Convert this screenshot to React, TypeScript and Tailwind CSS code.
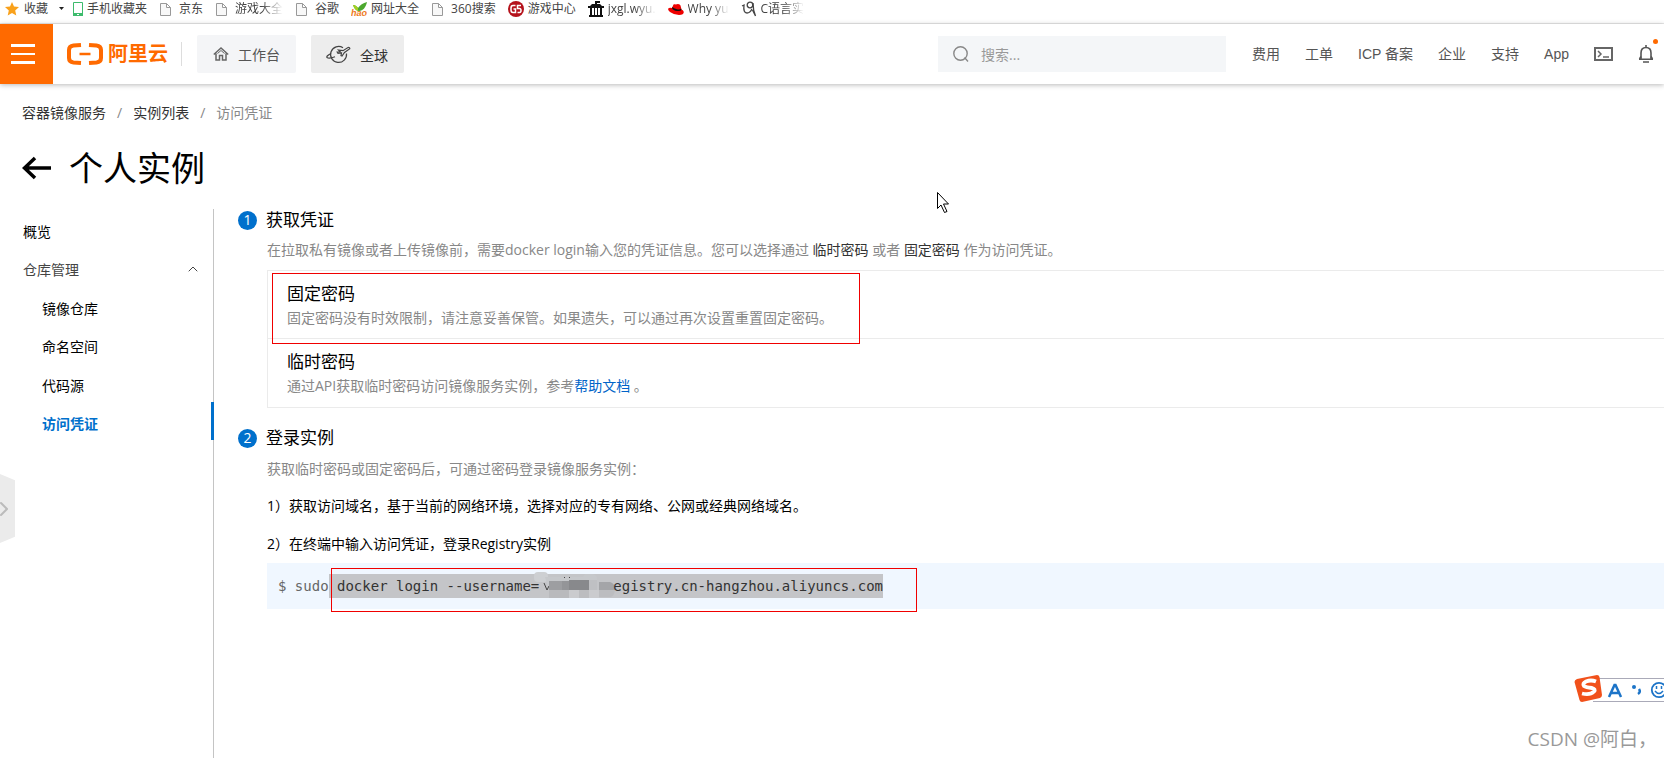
import { ReactNode } from "react";
import { ChevronRight, ChevronUp } from "lucide-react";
import clsx from "clsx";

interface BookmarkProps {
  icon: ReactNode
  label: string
  faded?: boolean
}

const StarIcon = () => (
  <svg width="16" height="16" viewBox="0 0 16 16">
    <path d="M8 1l2 4.600 5 .5-3.800 3.400 1.100 5L8 12l-4.300 2.500 1.100-5L1 6.100l5-.5z" fill="#f9a11b" />
  </svg>
);

const PhoneIcon = () => (
  <svg width="16" height="16" viewBox="0 0 16 16">
    <path d="M6.500 1.500h9v13h-9z" fill="#fff" stroke="#3dbb6c" />
    <path d="M6 12h10v3H6z" fill="#3dbb6c" />
    <path d="M10 13h2v1h-2z" fill="#fff" />
  </svg>
);

const PageIcon = () => (
  <svg width="16" height="16" viewBox="0 0 16 16">
    <path d="M1.500 2.500h6l4 4v8h-10zM7.500 2.500v4h4" fill="#f8f8f8" stroke="#999" />
  </svg>
);

const HaoIcon = () => (
  <svg width="16" height="16" viewBox="0 0 16 16">
    <path d="M2 4c3 0 4 2 5 3C9 4 12 2 16 1c-1 5-4 9-8 9C5 10 3 7 2 4z" fill="#4ca82f" />
    <path d="M2 4c3 0 4 2 5 3l0 3C4 9 3 7 2 4z" fill="#a4d022" />
    <text x="0" y="15" fontSize="9" fontWeight="bold" fontStyle="italic" fill="#ee7a22" fontFamily="Liberation Sans, sans-serif">hao</text>
  </svg>
);

const GameIcon = () => (
  <svg width="16" height="16" viewBox="0 0 16 16" fill="none">
    <circle cx="8" cy="8" r="8" fill="#b5121b" />
    <path d="M7.500 4.500H5Q3 4.500 3 7v2q0 2.500 2 2.500h2.500V8H5.500M13 4.500H9.500v3h2q1.500 0 1.500 2t-1.500 2h-2" stroke="#fff" strokeWidth="1.500" />
  </svg>
);

const TempleIcon = () => (
  <svg width="16" height="16" viewBox="0 0 16 16" fill="#111">
    <path d="M7 0h5v2H9v1h3l3 3v1H1V6l3-3h3zM2 7h2v7H2zM6 7h1v7H6zM9 7h1v7H9zM12 7h2v7h-2zM1 14h14v2H1z" />
    <path d="M0 5h16v2H0z" />
  </svg>
);

const HatIcon = () => (
  <svg width="16" height="16" viewBox="0 0 16 16">
    <path d="M4 7l1.500-3.500Q6 3 7 3.300t3-.3q2 0 2.500 1.500l1 4q2 .8 2.300 2.500 0 3-4.800 3T2 11Q-.500 9 .300 7.500 1 6.500 4 7z" fill="#e00" />
    <path d="M4 7q1 2.500 5 3 4 .5 4.500-1.500L13 7.500q-1 1.500-4 .8-3.500-.8-4.500-2.300z" fill="#111" />
  </svg>
);

const ScriptIcon = () => (
  <svg width="16" height="16" viewBox="0 0 16 16" fill="none" stroke="#444" strokeWidth="1.300">
    <path d="M1 5l2-1q-1 8 3 8 3 0 5-4" />
    <circle cx="9" cy="4" r="2.800" />
    <path d="M12 2q0 7 2.500 13L11.500 9" />
  </svg>
);

const Bookmark = ({ icon, label, faded }: BookmarkProps) => (
  <a href="#" className="flex shrink-0 items-center gap-1">
    {icon}
    <span
      className={clsx(
        "whitespace-nowrap",
        faded && "[mask-image:linear-gradient(to_right,#000_55%,transparent)]"
      )}>
      {label}
    </span>
  </a>
);

const BookmarkBar = () => (
  <div className="flex h-6 items-center border-b border-[#e8e8e8] pb-[6px] pl-1 text-[12px] text-[#444]">
    <Bookmark icon={<StarIcon />} label="收藏" />
    <svg width="5" height="3" className="mr-[3px] ml-[11px] shrink-0"><path d="M0 0h5L2.500 3z" fill="#222" /></svg>
    <div className="flex gap-3">
      <Bookmark icon={<PhoneIcon />} label="手机收藏夹" />
      <Bookmark icon={<PageIcon />} label="京东" />
      <Bookmark icon={<PageIcon />} label="游戏大全" faded />
      <Bookmark icon={<PageIcon />} label="谷歌" />
      <Bookmark icon={<HaoIcon />} label="网址大全" />
      <Bookmark icon={<PageIcon />} label="360搜索" />
      <Bookmark icon={<GameIcon />} label="游戏中心" />
      <Bookmark icon={<TempleIcon />} label="jxgl.wyu." faded />
      <Bookmark icon={<HatIcon />} label="Why yu" faded />
      <Bookmark icon={<ScriptIcon />} label="C语言实" faded />
    </div>
  </div>
);

const Logo = () => (
  <a href="#" className="flex items-center gap-[5px] text-[20px] leading-6 font-bold whitespace-nowrap text-[#ff6a00]">
    <svg width="36" height="22" viewBox="0 0 36 22" fill="none" stroke="#ff6a00">
      <path d="M14 2L6.500 2.500Q2 3 2 7v8q0 4 4.500 4.500l7.500.5" strokeWidth="4" />
      <path d="M22 2L29.500 2.500Q34 3 34 7v8q0 4-4.500 4.500l-7.500.5" strokeWidth="4" />
      <path d="M12.500 11h11" strokeWidth="2.500" />
    </svg>
    阿里云
  </a>
);

const HomeIcon = () => (
  <svg width="16" height="16" viewBox="0 0 16 16" fill="none" stroke="#666" strokeWidth="1.500">
    <path d="M.800 8.500L8 2l7.200 6.500M3 7.500V14h3.500V9.500h3V14H13V7.500" />
    <path d="M4.500 7.500L8 4.500l3.500 3" strokeWidth="1" />
  </svg>
);

const GlobeIcon = () => (
  <svg width="25" height="20" viewBox="0 0 25 20" fill="none" stroke="#444" strokeWidth="1.200">
    <path d="M17 3.800A8 8 0 1 0 20.500 9.500" />
    <path d="M5 9.500Q0 12 1 13.500 3 15 9 12.800" />
    <path d="M12.500 6l4.500.7 5-3.200q2-.3 1.800 1.200l-5.300 3.800-2.500 3.500-1-.3.500-2.700-3.500.300-.8-1.300 3-.2z" fill="#eee" />
  </svg>
);

const NAV_LINKS = ["费用", "工单", "ICP 备案", "企业", "支持", "App"];

const Header = () => (
  <header className="flex h-[60px] items-center text-[14px] text-[#555] shadow-[0_1px_5px_rgba(0,0,0,0.28)]">
    <button aria-label="菜单" className="flex h-full w-[53px] shrink-0 flex-col justify-center gap-[6px] bg-[#ff6a00] pl-[11px]">
      <span className="h-[3px] w-6 bg-white" />
      <span className="h-[2px] w-6 bg-white" />
      <span className="h-[3px] w-6 bg-white" />
    </button>
    <div className="mr-[15px] ml-[14px] border-r border-[#ddd] pr-[13px]"><Logo /></div>
    <button className="flex h-[38px] w-[99px] shrink-0 items-center gap-[9px] rounded-xs bg-[#f4f5f7] pl-4">
      <HomeIcon />
      工作台
    </button>
    <button className="ml-[15px] flex h-[38px] w-[93px] shrink-0 items-center gap-[9px] rounded-xs bg-[#ededed] pl-[15px] text-[#333]">
      <GlobeIcon />
      <span className="pt-[2px]">全球</span>
    </button>
    <label className="mr-[26px] ml-auto flex h-9 w-72 items-center gap-3 bg-[#f4f6f8] pl-[15px]">
      <svg width="16" height="16" viewBox="0 0 16 16" fill="none" stroke="#888" strokeWidth="1.400">
        <circle cx="7.500" cy="7.500" r="6.700" />
        <path d="M11.500 11.500l3.500 4" />
      </svg>
      <input type="text" aria-label="搜索" placeholder="搜索..." className="min-w-0 flex-1 bg-transparent outline-none placeholder:text-[#999]" />
    </label>
    <nav className="flex shrink-0 items-center gap-[25px] pr-[10px] font-['Liberation_Sans','Noto_Sans_CJK_SC',sans-serif] whitespace-nowrap">
      {NAV_LINKS.map(link => <a key={link} href="#">{link}</a>)}
      <button aria-label="终端">
        <svg width="19" height="14" viewBox="0 0 19 14" fill="none" stroke="#666" strokeWidth="2">
          <path d="M1 1h17v12H1z" />
          <path d="M4 4l3 3-3 3M9 10h6" strokeWidth="1.500" />
        </svg>
      </button>
      <button aria-label="消息" className="relative">
        <svg width="16" height="18" viewBox="0 0 16 18" fill="none" stroke="#555" strokeWidth="1.600">
          <path d="M8 0v2M1 14.200h14M3 14V8q0-5.500 5-5.500T13 8v6M5 17h6" />
          <path d="M3 11.500L1.500 14M13 11.500l1.500 2.500" />
        </svg>
        <span className="absolute -top-[6px] -right-1 h-[5px] w-[5px] rounded-full bg-[#ff6a00]" />
      </button>
    </nav>
  </header>
);

const Sidebar = () => (
  <nav className="relative w-[214px] shrink-0 border-r border-[#c4c4c4] pt-[3px] text-[14px] text-black">
    <a href="#" className="flex h-[38px] items-center pl-[23px]">概览</a>
    <button className="flex h-[38px] w-full items-center justify-between pr-[12px] pl-[23px] text-[#444]">
      仓库管理
      <ChevronUp size={16} strokeWidth={1.5} />
    </button>
    <a href="#" className="flex h-[38px] items-center pt-[2px] pl-[42px]">镜像仓库</a>
    <a href="#" className="flex h-[38px] items-center pt-[2px] pl-[42px]">命名空间</a>
    <a href="#" className="flex h-[38px] items-center pt-1 pl-[42px]">代码源</a>
    <a href="#" className="-mr-px flex h-[38px] items-center border-r-3 border-[#0070cc] pt-1 pl-[42px] font-bold text-[#0070cc]">访问凭证</a>
  </nav>
);

const StepTitle = ({ step, title }: { step: number, title: string }) => (
  <h2 className="flex h-5 items-center gap-[9px] text-[17px] text-black">
    <span className="flex h-[19px] w-[19px] items-center justify-center rounded-full bg-[#0070cc] text-[14px] leading-none text-white">{step}</span>
    {title}
  </h2>
);

// pixelated patch hiding the account name
const Mosaic = () => (
  <svg width="74" height="24" viewBox="0 0 74 24" className="shrink-0 overflow-visible">
    <rect x="-5" y="-2" width="14" height="10" rx="4" fill="#cdcfd2" />
    <path d="M6 3h38l2-3h8q4 1 4 5v11H10z" fill="#c6c8cb" />
    <path d="M5 9l3 7 2-4" fill="none" stroke="#444" />
    <path d="M10 7h13v9H10z" fill="#9d9ea1" />
    <path d="M23 7h7v9h-7z" fill="#949598" />
    <path d="M30 6h20v10H30z" fill="#88898c" />
    <path d="M50 6h8v10h-8z" fill="#bfc0c3" />
    <path d="M60 8h11q5 1 5 8H60z" fill="#a4a5a8" />
    <path d="M10 16h20v8H10z" fill="#b9babd" />
    <path d="M30 16h10v8H30zM50 16h10v8H50z" fill="#cacbce" />
    <path d="M40 16h10v8H40zM60 16h16q-1 7-5 7H60z" fill="#bcbdc0" />
    <path d="M25 3h1v1h-1zM30 3h1v1h-1z" fill="#444" />
  </svg>
);

const Credentials = () => (
  <main className="min-w-0 flex-1 pt-px pl-6 text-[14px] leading-5 text-[#888]">
    <StepTitle step={1} title="获取凭证" />
    <div className="pl-[29px]">
      <p className="mt-[10px]">
        在拉取私有镜像或者上传镜像前，需要docker login输入您的凭证信息。您可以选择通过 <span className="text-[#333]">临时密码</span> 或者 <span className="text-[#333]">固定密码</span> 作为访问凭证。
      </p>
      <div className="relative mt-[10px] border-y border-l border-[#ebebeb] leading-6">
        <div className="border-b border-[#ebebeb] pt-[11px] pb-2 pl-[19px]">
          <h3 className="text-[17px] text-black">固定密码</h3>
          <p>固定密码没有时效限制，请注意妥善保管。如果遗失，可以通过再次设置重置固定密码。</p>
        </div>
        <div className="pt-[11px] pb-[9px] pl-[19px]">
          <h3 className="text-[17px] text-black">临时密码</h3>
          <p>通过API获取临时密码访问镜像服务实例，参考<a href="#" className="text-[#0064c8]">帮助文档</a> 。</p>
        </div>
        <div className="absolute top-[2px] left-1 h-[71px] w-[588px] border border-[#f00000]" />
      </div>
    </div>
    <div className="mt-5"><StepTitle step={2} title="登录实例" /></div>
    <div className="pl-[29px]">
      <p className="mt-[11px]">获取临时密码或固定密码后，可通过密码登录镜像服务实例：</p>
      <p className="mt-[17px] text-black">1）获取访问域名，基于当前的网络环境，选择对应的专有网络、公网或经典网络域名。</p>
      <p className="mt-[18px] text-black">2）在终端中输入访问凭证，登录Registry实例</p>
      <div className="relative mt-[9px] flex h-[46px] items-center bg-[#f0f7ff] pl-[11px] font-['DejaVu_Sans_Mono',monospace] whitespace-pre text-[#666]">
        <code className="font-[inherit]">$ sudo</code>
        <code className="flex h-6 items-center bg-[#c4c5c8] font-[inherit] text-[#333]">
          {" docker login --username="}
          <Mosaic />
          egistry.cn-hangzhou.aliyuncs.com
        </code>
        <div className="absolute top-[5px] left-16 h-11 w-[586px] border border-[#f00000]" />
      </div>
    </div>
  </main>
);

const InputMethodBar = () => (
  <div className="absolute top-[674px] right-0 flex h-[29px] w-[91px] items-center">
    <svg width="91" height="29" viewBox="0 0 91 29" fill="none">
      <path d="M24 4.500h67v23H20z" fill="#fff" />
      <path d="M24 4.500h67M20 27.500h71" stroke="#aaaab8" />
      <path d="M4 5l20-4q2 0 2.500 2L29 21q0 2-2 3L9 28q-2 0-2.500-2L1.500 8q0-2 2.500-3z" fill="#f1511b" />
      <path d="M23 7.500q-5-2-10 0-4 2-2 4.500 2 1.500 8 2 4 1 2 3.500-4 4-12 2" stroke="#fff" strokeWidth="3.800" />
      <path d="M36 23l5.500-12h1L48 23M38 19h8" stroke="#1c74c8" strokeWidth="2.500" />
      <circle cx="61" cy="13" r="2" fill="#1c74c8" />
      <path d="M66 15q2 3-1 5" stroke="#1c74c8" strokeWidth="2.500" />
      <circle cx="86" cy="16" r="7.200" stroke="#1c74c8" strokeWidth="1.800" />
      <path d="M83.500 12v3M88.500 12v3M82 17q4 5 8 0" stroke="#1c74c8" strokeWidth="1.500" />
    </svg>
  </div>
);

const App = () => {
  return (
    <div className="relative flex min-h-screen flex-col overflow-hidden bg-white font-['Open_Sans','Noto_Sans_CJK_SC',sans-serif]">
      <BookmarkBar />
      <Header />
      <div className="mt-[18px] flex h-5 items-center pl-[22px] text-[14px] text-[#333]">
        <a href="#">容器镜像服务</a>
        <span className="mx-[11px] text-[#888]">/</span>
        <a href="#">实例列表</a>
        <span className="mx-[11px] text-[#888]">/</span>
        <span className="text-[#888]">访问凭证</span>
      </div>
      <div className="mt-[21px] mb-4 flex h-[50px] items-center gap-[17px] pl-[22px]">
        <button aria-label="返回">
          <svg width="30" height="24" viewBox="0 0 30 24" fill="none" stroke="#000" strokeWidth="3.500">
            <path d="M29 12H3M13 2L2.500 12 13 22" />
          </svg>
        </button>
        <h1 className="text-[34px] leading-[50px] text-black">个人实例</h1>
      </div>
      <div className="flex flex-1">
        <Sidebar />
        <Credentials />
      </div>

      <button aria-label="展开" className="absolute top-[474px] left-0 flex h-[69px] w-[15px] items-center bg-[#ebebeb] text-[#bbb] [clip-path:polygon(0_0,100%_9%,100%_91%,0_100%)]">
        <ChevronRight size={24} className="-ml-2 shrink-0" />
      </button>
      <svg width="13" height="22" viewBox="0 0 13 22" className="absolute top-[192px] left-[937px]">
        <path d="M.500.500v16l3.500-3.500 3.500 7.500 2.500-1-3.500-7.500h5z" fill="#fff" stroke="#000" />
      </svg>
      <InputMethodBar />
      <p className="absolute top-[725px] right-[7px] text-[19px] leading-7 whitespace-nowrap text-[#999]">CSDN @阿白，</p>
    </div>
  );
};

export default App
